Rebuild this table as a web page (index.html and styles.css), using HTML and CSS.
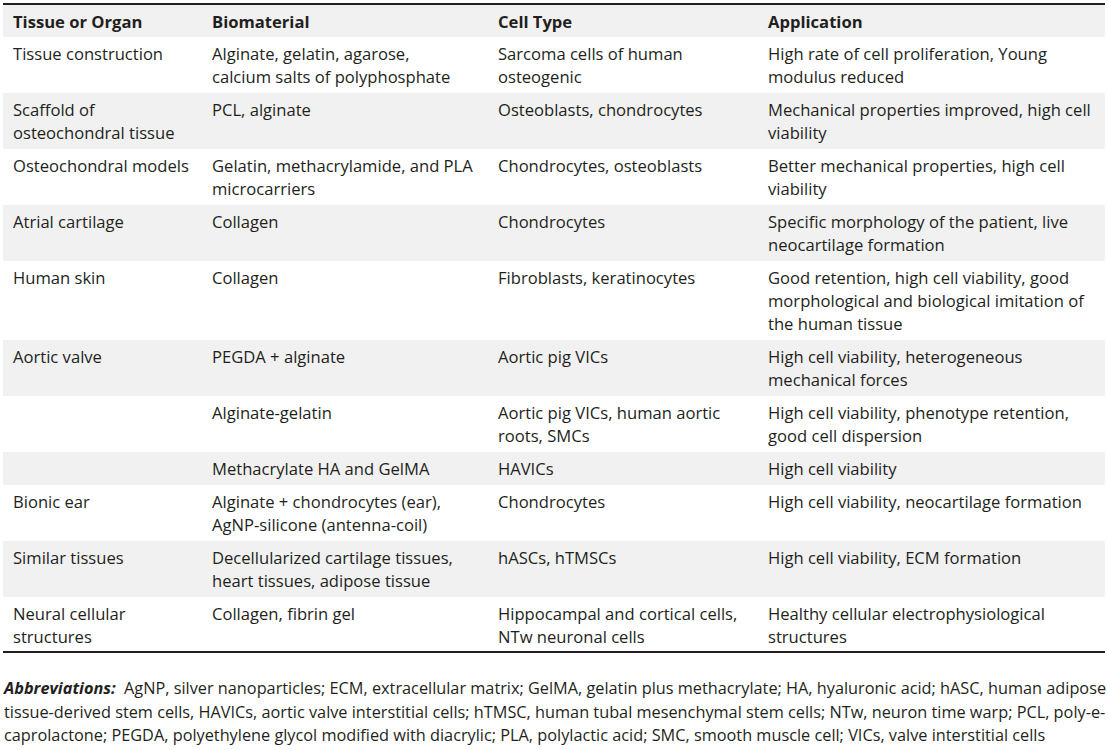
FILE: index.html
```html
<!DOCTYPE html>
<html>
<head>
<meta charset="utf-8">
<link rel="stylesheet" href="styles.css">
</head>
<body>
<table class="data">
  <colgroup>
    <col class="c1"><col class="c2"><col class="c3"><col class="c4">
  </colgroup>
  <thead>
    <tr><th>Tissue or Organ</th><th>Biomaterial</th><th>Cell Type</th><th>Application</th></tr>
  </thead>
  <tbody>
    <tr><td>Tissue construction</td><td>Alginate, gelatin, agarose,<br>calcium salts of polyphosphate</td><td>Sarcoma cells of human<br>osteogenic</td><td>High rate of cell proliferation, Young<br>modulus reduced</td></tr>
    <tr class="alt"><td>Scaffold of<br>osteochondral tissue</td><td>PCL, alginate</td><td>Osteoblasts, chondrocytes</td><td>Mechanical properties improved, high cell<br>viability</td></tr>
    <tr><td>Osteochondral models</td><td>Gelatin, methacrylamide, and PLA<br>microcarriers</td><td>Chondrocytes, osteoblasts</td><td>Better mechanical properties, high cell<br>viability</td></tr>
    <tr class="alt"><td>Atrial cartilage</td><td>Collagen</td><td>Chondrocytes</td><td>Specific morphology of the patient, live<br>neocartilage formation</td></tr>
    <tr><td>Human skin</td><td>Collagen</td><td>Fibroblasts, keratinocytes</td><td>Good retention, high cell viability, good<br>morphological and biological imitation of<br>the human tissue</td></tr>
    <tr class="alt"><td>Aortic valve</td><td>PEGDA + alginate</td><td>Aortic pig VICs</td><td>High cell viability, heterogeneous<br>mechanical forces</td></tr>
    <tr><td></td><td>Alginate-gelatin</td><td>Aortic pig VICs, human aortic<br>roots, SMCs</td><td>High cell viability, phenotype retention,<br>good cell dispersion</td></tr>
    <tr class="alt"><td></td><td>Methacrylate HA and GelMA</td><td>HAVICs</td><td>High cell viability</td></tr>
    <tr><td>Bionic ear</td><td>Alginate + chondrocytes (ear),<br>AgNP-silicone (antenna-coil)</td><td>Chondrocytes</td><td>High cell viability, neocartilage formation</td></tr>
    <tr class="alt"><td>Similar tissues</td><td>Decellularized cartilage tissues,<br>heart tissues, adipose tissue</td><td>hASCs, hTMSCs</td><td>High cell viability, ECM formation</td></tr>
    <tr class="last"><td>Neural cellular<br>structures</td><td>Collagen, fibrin gel</td><td>Hippocampal and cortical cells,<br>NTw neuronal cells</td><td>Healthy cellular electrophysiological<br>structures</td></tr>
  </tbody>
</table>
<p class="notes"><span class="lead">Abbreviations:</span>&nbsp; AgNP, silver nanoparticles; ECM, extracellular matrix; GelMA, gelatin plus methacrylate; HA, hyaluronic acid; hASC, human adipose<br>tissue-derived stem cells, HAVICs, aortic valve interstitial cells; hTMSC, human tubal mesenchymal stem cells; NTw, neuron time warp; PCL, poly-e-<br>caprolactone; PEGDA, polyethylene glycol modified with diacrylic; PLA, polylactic acid; SMC, smooth muscle cell; VICs, valve interstitial cells</p>
</body>
</html>
```

FILE: styles.css
```css
html, body {
  margin: 0;
  padding: 0;
  background: #ffffff;
}
body {
  font-family: "Open Sans", "Liberation Sans", sans-serif;
  color: #231f20;
  font-size: 16.6px;
}
.data {
  margin: 3px 0 0 3px;
  width: 1102px;
  border-collapse: collapse;
  table-layout: fixed;
  border-top: 2px solid #231f20;
  border-bottom: 2px solid #231f20;
}
.c1 { width: 199px; }
.c2 { width: 286px; }
.c3 { width: 270px; }
.c4 { width: 347px; }
.data th, .data td {
  text-align: left;
  vertical-align: top;
  padding: 5px 2px 5px 10px;
  line-height: 23px;
  white-space: nowrap;
}
.data th {
  font-weight: 700;
  background: #f1f1f1;
  padding-bottom: 4px;
}
.data tr.alt td {
  background: #f1f1f1;
}
.data tr.last td {
  padding-bottom: 3px;
}
.notes {
  margin: 24px 0 0 4px;
  font-size: 16.3px;
  line-height: 23.5px;
  white-space: nowrap;
}
.notes .lead {
  font-weight: 700;
  font-style: italic;
}
```
